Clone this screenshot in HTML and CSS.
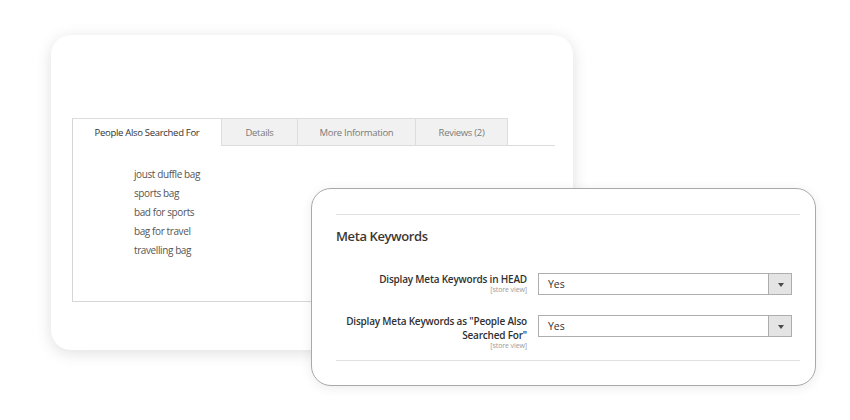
FILE: index.html
```html
<!DOCTYPE html>
<html lang="en">
<head>
    <meta charset="UTF-8">
    <meta name="viewport" content="width=device-width, initial-scale=1.0">
    <title>Meta Keywords</title>
    <link rel="stylesheet" href="styles.css">
</head>
<body>

    <div class="card-back">
        <div class="tabs">
            <div class="tab active">People Also Searched For</div>
            <div class="tab tab-details">Details</div>
            <div class="tab tab-info">More Information</div>
            <div class="tab tab-reviews">Reviews (2)</div>
            <div class="tab-filler"></div>
        </div>
        <div class="panel">
            <ul class="keywords">
                <li>joust duffle bag</li>
                <li>sports bag</li>
                <li>bad for sports</li>
                <li>bag for travel</li>
                <li>travelling bag</li>
            </ul>
        </div>
    </div>

    <div class="card-front">
        <div class="section">
            <h2>Meta Keywords</h2>

            <div class="row">
                <div class="label">
                    <span>Display Meta Keywords in HEAD</span>
                    <small>[store view]</small>
                </div>
                <div class="select">
                    <span>Yes</span>
                    <div class="arrow"></div>
                </div>
            </div>

            <div class="row row-two">
                <div class="label">
                    <span>Display Meta Keywords as "People Also Searched For"</span>
                    <small>[store view]</small>
                </div>
                <div class="select">
                    <span>Yes</span>
                    <div class="arrow"></div>
                </div>
            </div>
        </div>
    </div>

</body>
</html>
```

FILE: styles.css
```css
*{
    margin: 0;
    padding: 0;
    box-sizing: border-box;
}

html, body {
    width: 850px;
    height: 420px;
    overflow: hidden;
    background-color: #fff;
}

body {
    position: relative;
    font-family: "Open Sans", "Noto Sans", sans-serif;
    color: #333;
    padding-top: 35px;
    padding-left: 51px;
}

/* back window with the tabs */
.card-back{
    width: 522px;
    height: 315px;
    background-color: #fff;
    border-radius: 20px;
    box-shadow: 0 3px 16px rgba(0, 0, 0, 0.13);
    padding: 83px 18px 0 21px;
}

.tabs{
    display: flex;
    height: 28px;
}

.tab{
    height: 28px;
    font-size: 9.5px;
    letter-spacing: -0.3px;
    line-height: 27px;
    text-align: center;
    color: #7a7a7a;
    background-color: #f1f1f1;
    border-top: 1px solid #dcdcdc;
    border-right: 1px solid #dcdcdc;
    border-bottom: 1px solid #dcdcdc;
}

.tab.active{
    width: 150px;
    color: #333;
    background-color: #fff;
    border-left: 1px solid #d6d6d6;
    border-bottom: none;
}

.tab-details{
    width: 76px;
}
.tab-info{
    width: 118px;
}
.tab-reviews{
    width: 92px;
}

.tab-filler{
    flex: 1;
    border-bottom: 1px solid #dcdcdc;
}

.panel{
    height: 156px;
    border-left: 1px solid #d6d6d6;
    border-bottom: 1px solid #d6d6d6;
    padding: 19px 0 0 61px;
}

.keywords{
    list-style: none;
    font-size: 10px;
    letter-spacing: -0.4px;
    line-height: 19px;
    color: #555;
}

/* front window with the settings */
.card-front{
    position: absolute;
    left: 311px;
    top: 188px;
    width: 505px;
    height: 198px;
    background-color: #fff;
    border: 1px solid #a9a9a9;
    border-radius: 20px;
    box-shadow: 0 2px 12px rgba(0, 0, 0, 0.08);
    padding: 25px 15px 0 24px;
}

.section{
    border-top: 1px solid #e0e0e0;
    border-bottom: 1px solid #e0e0e0;
    padding: 11px 0 10px 0;
}

.section h2{
    font-size: 13px;
    letter-spacing: -0.4px;
    font-weight: 600;
    line-height: 20px;
    color: #41362f;
    margin-bottom: 26px;
}

.row{
    display: flex;
    align-items: flex-start;
}

.row-two{
    margin-top: 19px;
}

.label{
    width: 191px;
    text-align: right;
    font-size: 10px;
    letter-spacing: -0.2px;
    font-weight: 600;
    line-height: 14px;
    color: #303030;
}

.label span{
    display: block;
}

.label small{
    display: block;
    font-size: 7px;
    letter-spacing: -0.1px;
    font-weight: 400;
    line-height: 8px;
    color: #9a9a9a;
}

.select{
    display: flex;
    align-items: center;
    width: 254px;
    height: 22px;
    margin: 1px 0 0 11px;
    border: 1px solid #adadad;
    font-size: 10.5px;
    color: #333;
}

.select span{
    flex: 1;
    padding-left: 9px;
}

.arrow{
    width: 23px;
    height: 100%;
    background-color: #e4e4e4;
    border-left: 1px solid #adadad;
    position: relative;
}

.arrow::after{
    content: "";
    position: absolute;
    left: 9px;
    top: 9px;
    border-left: 3px solid transparent;
    border-right: 3px solid transparent;
    border-top: 4px solid #4a4a4a;
}
```
